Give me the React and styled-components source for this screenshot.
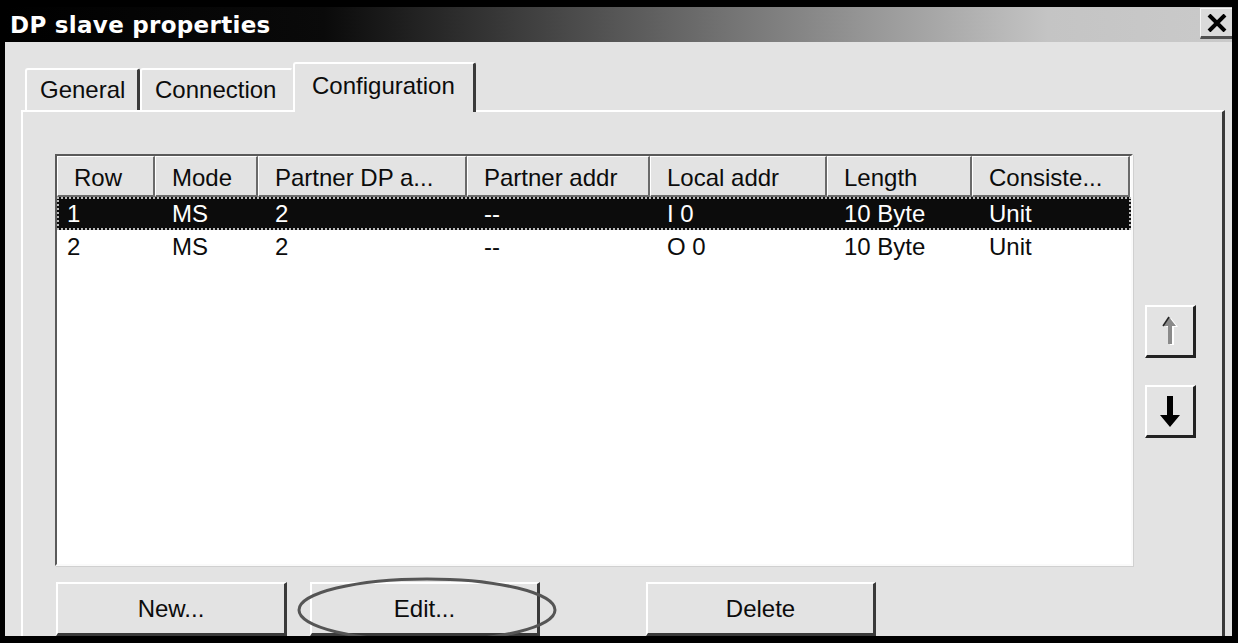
import styled, { createGlobalStyle } from 'styled-components'

const GlobalStyle = createGlobalStyle`
  html, body {
    margin: 0;
    padding: 0;
    background: #000;
    overflow: hidden;
  }
  body {
    font-family: "Liberation Sans", Arial, sans-serif;
  }
`

const Screen = styled.div`
  width: 1238px;
  height: 643px;
  padding: 7px 0 0 5px;
  box-sizing: border-box;
  background: #000;
`

const Dialog = styled.div`
  width: 1227px;
  height: 629px;
  background: #e3e3e3;
  display: flex;
  flex-direction: column;
  overflow: hidden;
`

const TitleBar = styled.div`
  height: 35px;
  flex: none;
  display: flex;
  align-items: center;
  justify-content: space-between;
  background: linear-gradient(to right, #000 0%, #0a0a0a 26%, #707070 58%, #c4c4c4 85%, #cacaca 100%);
`

const Title = styled.div`
  font-family: "DejaVu Sans", Verdana, sans-serif;
  font-weight: bold;
  font-size: 23px;
  color: #fff;
  padding-left: 5px;
  letter-spacing: 0.3px;
`

const CloseButton = styled.div`
  width: 32px;
  height: 31px;
  align-self: flex-start;
  margin-top: 1px;
  box-sizing: border-box;
  background: #dadada;
  border-top: 1px solid #f4f4f4;
  border-left: 1px solid #f4f4f4;
  border-bottom: 3px solid #505050;
  display: flex;
  align-items: center;
  justify-content: center;
  svg { display: block; }
`

const Body = styled.div`
  flex: 1;
  padding: 20px 7px 0 16px;
  display: flex;
  flex-direction: column;
`

const TabStrip = styled.div`
  display: flex;
  align-items: flex-end;
  height: 48px;
  padding-left: 4px;
  position: relative;
  z-index: 1;
`

const Tab = styled.div`
  box-sizing: border-box;
  width: ${p => p.$w}px;
  height: ${p => (p.$active ? 50 : 42)}px;
  margin-bottom: ${p => (p.$active ? -2 : 0)}px;
  padding-left: ${p => p.$pad}px;
  background: #e3e3e3;
  border-top: 2px solid #fff;
  border-left: 2px solid #fff;
  border-right: ${p => (p.$edge ? '3px solid #3a3a3a' : '2px solid #e3e3e3')};
  border-radius: 3px 3px 0 0;
  font-size: 24px;
  color: #0c0c0c;
  display: flex;
  align-items: center;
  padding-bottom: ${p => (p.$active ? 4 : 0)}px;
`

const Panel = styled.div`
  flex: 1;
  border-top: 2px solid #fff;
  border-left: 2px solid #fff;
  border-right: 3px solid #3a3a3a;
  padding: 42px 0 0 32px;
  display: flex;
  flex-direction: column;
`

const ListArea = styled.div`
  display: flex;
  align-items: flex-start;
`

const ListBox = styled.div`
  width: 1078px;
  height: 412px;
  box-sizing: border-box;
  background: #fff;
  border-top: 2px solid #5a5a5a;
  border-left: 2px solid #5a5a5a;
  border-right: 2px solid #fafafa;
  border-bottom: 2px solid #fafafa;
  box-shadow: 1px 1px 0 #d0d0d0;
`

const columns = '98px 103px 209px 183px 177px 145px 158px'

const HeaderRow = styled.div`
  display: grid;
  grid-template-columns: ${columns};
  height: 41px;
`

const HeaderCell = styled.div`
  box-sizing: border-box;
  background: #e3e3e3;
  border-top: 1px solid #fff;
  border-left: 1px solid #fff;
  border-right: 2px solid #6a6a6a;
  border-bottom: 2px solid #6a6a6a;
  padding: 3px 0 0 16px;
  font-size: 24px;
  color: #0c0c0c;
  display: flex;
  align-items: center;
  white-space: nowrap;
  overflow: hidden;
`

const DataRow = styled.div`
  display: grid;
  grid-template-columns: ${columns};
  height: 33px;
  box-sizing: border-box;
  background: ${p => (p.$selected ? '#0c0c0c' : '#fff')};
  color: ${p => (p.$selected ? '#fff' : '#0c0c0c')};
  outline: ${p => (p.$selected ? '2px dotted #bdbdbd' : 'none')};
  outline-offset: -2px;
`

const DataCell = styled.div`
  padding-left: ${p => (p.$first ? 10 : 17)}px;
  font-size: 24px;
  display: flex;
  align-items: center;
  white-space: nowrap;
`

const SideButtons = styled.div`
  display: flex;
  flex-direction: column;
  gap: 27px;
  margin: 151px 0 0 12px;
`

const ArrowButton = styled.div`
  width: 51px;
  height: 53px;
  box-sizing: border-box;
  background: #e3e3e3;
  border-top: 2px solid #fff;
  border-left: 2px solid #fff;
  border-right: 3px solid #222;
  border-bottom: 3px solid #222;
  display: flex;
  align-items: center;
  justify-content: center;
  svg { display: block; }
`

const ButtonRow = styled.div`
  display: flex;
  margin-top: 16px;
  padding-left: 1px;
  position: relative;
`

const PushButton = styled.div`
  width: ${p => p.$w}px;
  height: 54px;
  margin-left: ${p => p.$gap}px;
  box-sizing: border-box;
  background: #e3e3e3;
  border-top: 2px solid #fff;
  border-left: 2px solid #fff;
  border-right: 3px solid #3a3a3a;
  border-bottom: 3px solid #3a3a3a;
  font-size: 24px;
  color: #0c0c0c;
  display: flex;
  align-items: center;
  justify-content: center;
`

const Marker = styled.svg`
  position: absolute;
  left: 241px;
  top: -7px;
  pointer-events: none;
`

const headers = ['Row', 'Mode', 'Partner DP a...', 'Partner addr', 'Local addr', 'Length', 'Consiste...']

const rows = [
  ['1', 'MS', '2', '--', 'I 0', '10 Byte', 'Unit'],
  ['2', 'MS', '2', '--', 'O 0', '10 Byte', 'Unit'],
]

const App = () => {
  return (
    <>
      <GlobalStyle />
      <Screen>
        <Dialog>
          <TitleBar>
            <Title>DP slave properties</Title>
            <CloseButton>
              <svg width="20" height="18" viewBox="0 0 20 18">
                <path d="M2 1 L18 17 M18 1 L2 17" stroke="#000" strokeWidth="4" />
              </svg>
            </CloseButton>
          </TitleBar>
          <Body>
            <TabStrip>
              <Tab $w={115} $pad={13} $edge>General</Tab>
              <Tab $w={153} $pad={13}>Connection</Tab>
              <Tab $w={183} $pad={17} $active $edge>Configuration</Tab>
            </TabStrip>
            <Panel>
              <ListArea>
                <ListBox>
                  <HeaderRow>
                    {headers.map(h => <HeaderCell key={h}>{h}</HeaderCell>)}
                  </HeaderRow>
                  {rows.map((r, i) => (
                    <DataRow key={i} $selected={i === 0}>
                      {r.map((c, j) => <DataCell key={j} $first={j === 0}>{c}</DataCell>)}
                    </DataRow>
                  ))}
                </ListBox>
                <SideButtons>
                  <ArrowButton>
                    <svg width="22" height="32" viewBox="0 0 22 32">
                      <path d="M12 3 L19 12 L15 12 L15 30 L11 30 L11 12 L7 12 Z" fill="#fff" />
                      <path d="M10 2 L17 11 L13 11 L13 29 L9 29 L9 11 L4 11 Z" fill="#8a8a8a" />
                      <path d="M4 11 L10 2" stroke="#222" strokeWidth="1.5" />
                    </svg>
                  </ArrowButton>
                  <ArrowButton>
                    <svg width="22" height="34" viewBox="0 0 22 34">
                      <path d="M8 2 L14 2 L14 21 L21 21 L11 33 L1 21 L8 21 Z" fill="#000" />
                    </svg>
                  </ArrowButton>
                </SideButtons>
              </ListArea>
              <ButtonRow>
                <PushButton $w={231} $gap={0}>New...</PushButton>
                <PushButton $w={230} $gap={23}>Edit...</PushButton>
                <PushButton $w={230} $gap={106}>Delete</PushButton>
                <Marker width="262" height="70" viewBox="0 0 262 70">
                  <ellipse cx="131" cy="35" rx="128" ry="31" fill="none" stroke="#555" strokeWidth="3" />
                </Marker>
              </ButtonRow>
            </Panel>
          </Body>
        </Dialog>
      </Screen>
    </>
  )
}

export default App
